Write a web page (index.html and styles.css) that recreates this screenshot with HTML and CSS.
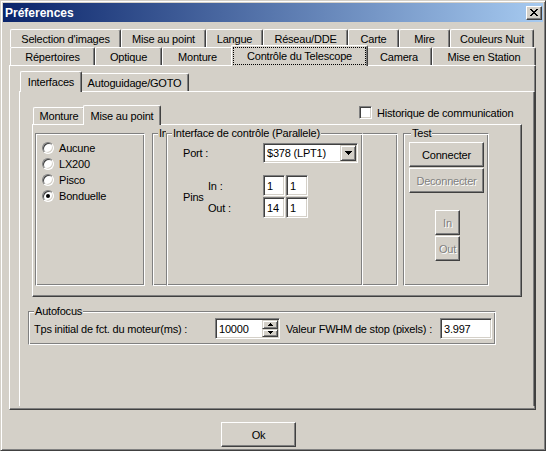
FILE: index.html
```html
<!DOCTYPE html>
<html lang="fr">
<head>
<meta charset="utf-8">
<title>Préferences</title>
<link rel="stylesheet" href="styles.css">
</head>
<body>
<div class="window">
  <div class="titlebar">
    <span class="title">Préferences</span>
    <span class="close-btn">
      <svg width="8" height="7" viewBox="0 0 8 7" shape-rendering="crispEdges"><path d="M0 0h2v1H0zM6 0h2v1H6zM1 1h2v1H1zM5 1h2v1H5zM2 2h4v1H2zM3 3h2v1H3zM2 4h4v1H2zM1 5h2v1H1zM5 5h2v1H5zM0 6h2v1H0zM6 6h2v1H6z" fill="#000"/></svg>
    </span>
  </div>
  <div class="client">
    <div class="main-strip">
      <div class="tabrow row1">
        <div class="tab">Selection d'images</div>
        <div class="tab">Mise au point</div>
        <div class="tab">Langue</div>
        <div class="tab">Réseau/DDE</div>
        <div class="tab">Carte</div>
        <div class="tab">Mire</div>
        <div class="tab">Couleurs Nuit</div>
      </div>
      <div class="tabrow row2">
        <div class="tab">Répertoires</div>
        <div class="tab">Optique</div>
        <div class="tab">Monture</div>
        <div class="tab active"><span class="focus">Contrôle du Telescope</span></div>
        <div class="tab">Camera</div>
        <div class="tab">Mise en Station</div>
      </div>
    </div>
    <div class="page outer-page">
      <div class="tabrow sub-strip">
        <div class="tab active">Interfaces</div>
        <div class="tab">Autoguidage/GOTO</div>
      </div>
      <div class="page iface-page">
        <div class="tabrow mp-strip">
          <div class="tab">Monture</div>
          <div class="tab active">Mise au point</div>
          <div class="check-row"><span class="chk"></span>Historique de communication</div>
        </div>
        <div class="page mp-page">
          <div class="group radios">
            <div class="radio"><span class="dot"></span>Aucune</div>
            <div class="radio"><span class="dot"></span>LX200</div>
            <div class="radio"><span class="dot"></span>Pisco</div>
            <div class="radio"><span class="dot on"></span>Bonduelle</div>
          </div>
          <div class="group ir">
            <span class="caption clip">In</span>
            <div class="group iface">
              <span class="caption">Interface de contrôle (Parallele)</span>
              <div class="port-row">
                <span class="port-lbl">Port :</span>
                <div class="combo">
                  <span class="combo-text">$378 (LPT1)</span>
                  <span class="combo-btn"><svg width="7" height="4" viewBox="0 0 7 4" shape-rendering="crispEdges"><path d="M0 0h7v1H0zM1 1h5v1H1zM2 2h3v1H2zM3 3h1v1H3z" fill="#000"/></svg></span>
                </div>
              </div>
              <div class="pins">
                <span class="pins-lbl">Pins</span>
                <span class="io-lbl">In :</span>
                <div class="edit pin">1</div>
                <div class="edit pin">1</div>
                <span class="io-lbl">Out :</span>
                <div class="edit pin">14</div>
                <div class="edit pin">1</div>
              </div>
            </div>
          </div>
          <div class="group test">
            <span class="caption test-cap">Test</span>
            <button class="btn connect">Connecter</button>
            <button class="btn disabled deconnect">Deconnecter</button>
            <button class="btn disabled small in">In</button>
            <button class="btn disabled small out">Out</button>
          </div>
        </div>
        <div class="group autofocus">
          <span class="caption">Autofocus</span>
          <div class="af-row">
            <span>Tps initial de fct. du moteur(ms) :</span>
            <div class="edit spin-edit">
              <span>10000</span>
              <span class="spin">
                <span class="sbtn"><svg width="5" height="3" viewBox="0 0 5 3" shape-rendering="crispEdges"><path d="M2 0h1v1H2zM1 1h3v1H1zM0 2h5v1H0z" fill="#000"/></svg></span>
                <span class="sbtn"><svg width="5" height="3" viewBox="0 0 5 3" shape-rendering="crispEdges"><path d="M0 0h5v1H0zM1 1h3v1H1zM2 2h1v1H2z" fill="#000"/></svg></span>
              </span>
            </div>
            <span class="af-lbl2">Valeur FWHM de stop (pixels) :</span>
            <div class="edit">3.997</div>
          </div>
        </div>
      </div>
    </div>
    <div class="footer">
      <button class="btn ok">Ok</button>
    </div>
  </div>
</div>
</body>
</html>
```
FILE: styles.css
```css
* { box-sizing: border-box; }

body {
  margin: 0;
  background: #D4D0C8;
  font: 11px "Liberation Sans", Arial, sans-serif;
  letter-spacing: -0.2px;
  color: #000;
}

.window {
  width: 546px;
  height: 451px;
  border: 1px solid;
  border-color: #D4D0C8 #404040 #404040 #D4D0C8;
  box-shadow: inset 1px 1px 0 #fff, inset -1px -1px 0 #808080;
  padding: 2px;
  background: #D4D0C8;
  display: flex;
  flex-direction: column;
}

.titlebar {
  flex: none;
  height: 19px;
  background: linear-gradient(to right, #0A246A, #A6CAF0);
  display: flex;
  align-items: center;
  padding-left: 2px;
}

.title {
  flex: 1;
  color: #fff;
  font-weight: bold;
  font-size: 12px;
  letter-spacing: 0;
}

.close-btn {
  width: 16px;
  height: 14px;
  margin-right: 1px;
  background: #D4D0C8;
  border: 1px solid;
  border-color: #fff #404040 #404040 #fff;
  box-shadow: inset -1px -1px 0 #808080;
  display: flex;
  align-items: center;
  justify-content: center;
}

.client { flex: 1; }

/* ---------- tabs ---------- */
.main-strip { margin: 7px 0 0 7px; }

.tabrow {
  display: flex;
  align-items: flex-start;
  height: 18px;
}

.tab {
  flex: none;
  height: 18px;
  border-top: 1px solid #fff;
  border-left: 1px solid #fff;
  border-right: 1px solid #404040;
  box-shadow: inset -1px 0 0 #808080;
  border-radius: 2px 2px 0 0;
  background: #D4D0C8;
  display: flex;
  align-items: center;
  justify-content: center;
  white-space: nowrap;
}

.tab.active {
  height: 21px;
  margin: -2px -2px 0;
  position: relative;
  z-index: 1;
}

.row1 .tab:nth-child(1) { width: 111px; }
.row1 .tab:nth-child(2) { width: 85px; }
.row1 .tab:nth-child(3) { width: 57px; }
.row1 .tab:nth-child(4) { width: 85px; }
.row1 .tab:nth-child(5) { width: 51px; }
.row1 .tab:nth-child(6) { width: 51px; }
.row1 .tab:nth-child(7) { width: 84px; }

.row2 .tab:nth-child(1) { width: 85px; }
.row2 .tab:nth-child(2) { width: 67px; }
.row2 .tab:nth-child(3) { width: 71px; }
.row2 .tab:nth-child(4) { width: 137px; align-items: stretch; }
.row2 .tab:nth-child(5) { width: 66px; }
.row2 .tab:nth-child(6) { width: 104px; }

.focus {
  flex: 1;
  margin: 1px;
  border: 1px dotted #000;
  display: flex;
  align-items: center;
  justify-content: center;
}

/* ---------- pages ---------- */
.page {
  border: 1px solid;
  border-color: #fff #404040 #404040 #fff;
  box-shadow: inset -1px -1px 0 #808080;
  background: #D4D0C8;
}

.outer-page {
  width: 527px;
  height: 345px;
  margin-left: 6px;
}

.sub-strip { margin: 7px 0 0 12px; }
.sub-strip .tab:nth-child(1) { width: 62px; }
.sub-strip .tab:nth-child(2) { width: 109px; }

.iface-page {
  width: 516px;
  height: 315px;
  margin-left: 9px;
  border-bottom: 0;
  box-shadow: inset -1px 0 0 #808080;
}

.mp-strip {
  height: 17px;
  margin: 15px 0 0 13px;
}
.mp-strip .tab { height: 17px; }
.mp-strip .tab.active { height: 20px; }
.mp-strip .tab:nth-child(1) { width: 52px; }
.mp-strip .tab:nth-child(2) { width: 78px; }

.check-row {
  display: flex;
  align-items: center;
  margin: -1px 0 0 200px;
  white-space: nowrap;
}

.chk {
  width: 13px;
  height: 13px;
  margin-right: 5px;
  border: 1px solid;
  border-color: #808080 #fff #fff #808080;
  box-shadow: inset 1px 1px 0 #404040, inset -1px -1px 0 #D4D0C8;
  background: #fff;
}

.mp-page {
  width: 490px;
  height: 173px;
  margin-left: 12px;
  padding: 8px 0 0 2px;
  display: flex;
  align-items: flex-start;
}

/* ---------- group boxes ---------- */
.group {
  flex: none;
  border: 1px solid;
  border-color: #808080 #fff #fff #808080;
  box-shadow: inset 1px 1px 0 #fff, inset -1px -1px 0 #808080;
}

.caption {
  display: block;
  width: max-content;
  height: 13px;
  line-height: 13px;
  margin: -7px 0 -6px 5px;
  padding: 0 1px;
  background: #D4D0C8;
  white-space: nowrap;
}

.caption.test-cap { margin-left: 7px; }

.radios {
  width: 110px;
  height: 153px;
  padding: 6px 0 0 6px;
}

.radio {
  display: flex;
  align-items: center;
  height: 16px;
}

.dot {
  width: 12px;
  height: 12px;
  margin-right: 5px;
  border-radius: 50%;
  border: 1px solid;
  border-color: #808080 #fff #fff #808080;
  box-shadow: inset 1px 1px 0 #404040, inset -1px -1px 0 #D4D0C8;
  background: #fff;
  display: flex;
  align-items: center;
  justify-content: center;
}

.dot.on::after {
  content: "";
  width: 4px;
  height: 4px;
  border-radius: 50%;
  background: #000;
}

.ir {
  width: 246px;
  height: 153px;
  margin-left: 7px;
  display: flex;
  align-items: flex-start;
}

.caption.clip {
  width: 8px;
  margin: -7px 0 0 5px;
  padding: 0 0 0 1px;
  overflow: hidden;
}

.iface {
  width: 197px;
  height: 153px;
  margin-top: -1px;
}

.port-row {
  display: flex;
  align-items: center;
  margin-top: 9px;
  padding-left: 16px;
}

.port-lbl { width: 80px; }

.edit {
  border: 1px solid;
  border-color: #808080 #fff #fff #808080;
  box-shadow: inset 1px 1px 0 #404040, inset -1px -1px 0 #D4D0C8;
  background: #fff;
  padding-left: 3px;
  display: flex;
  align-items: center;
  height: 21px;
}

.combo {
  width: 95px;
  height: 20px;
  border: 1px solid;
  border-color: #808080 #fff #fff #808080;
  box-shadow: inset 1px 1px 0 #404040, inset -1px -1px 0 #D4D0C8;
  background: #fff;
  display: flex;
  align-items: center;
  padding-left: 3px;
}

.combo-text { flex: 1; }

.combo-btn,
.sbtn {
  background: #D4D0C8;
  border: 1px solid;
  border-color: #D4D0C8 #404040 #404040 #D4D0C8;
  box-shadow: inset 1px 1px 0 #fff, inset -1px -1px 0 #808080;
  display: flex;
  align-items: center;
  justify-content: center;
}

.combo-btn {
  width: 16px;
  height: 16px;
  margin-right: 1px;
}

.pins {
  display: grid;
  grid-template-columns: 25px 55px 23px 22px;
  grid-template-rows: 21px 21px;
  row-gap: 1px;
  align-items: center;
  margin-top: 12px;
  padding-left: 16px;
}

.pins-lbl { grid-row: 1 / span 2; grid-column: 1; }
.pin { width: 22px; }

.test {
  width: 86px;
  height: 153px;
  margin-left: 5px;
  display: flex;
  flex-direction: column;
  align-items: flex-start;
}

.btn {
  font: inherit;
  letter-spacing: inherit;
  color: #000;
  padding: 0;
  background: #D4D0C8;
  border: 1px solid;
  border-color: #fff #404040 #404040 #fff;
  box-shadow: inset -1px -1px 0 #808080;
  height: 25px;
  width: 75px;
}

.btn.disabled {
  color: #808080;
  text-shadow: 1px 1px 0 #fff;
}

.connect { margin: 8px 0 0 5px; }
.deconnect { margin: 1px 0 0 5px; }
.btn.small { width: 25px; }
.in { margin: 17px 0 0 31px; }
.out { margin: 1px 0 0 31px; }

/* ---------- autofocus ---------- */
.autofocus {
  width: 468px;
  height: 34px;
  margin: 14px 0 0 8px;
}

.af-row {
  display: grid;
  grid-template-columns: 181px 65px 160px 52px;
  align-items: center;
  margin-top: 6px;
  padding-left: 5px;
}

.af-lbl2 { padding-left: 6px; }

.spin-edit { justify-content: space-between; }

.spin {
  width: 16px;
  align-self: stretch;
  margin: 1px 1px 1px 0;
  display: flex;
  flex-direction: column;
}

.sbtn { flex: 1; }

/* ---------- footer ---------- */
.footer { padding: 12px 0 0 218px; }
```
